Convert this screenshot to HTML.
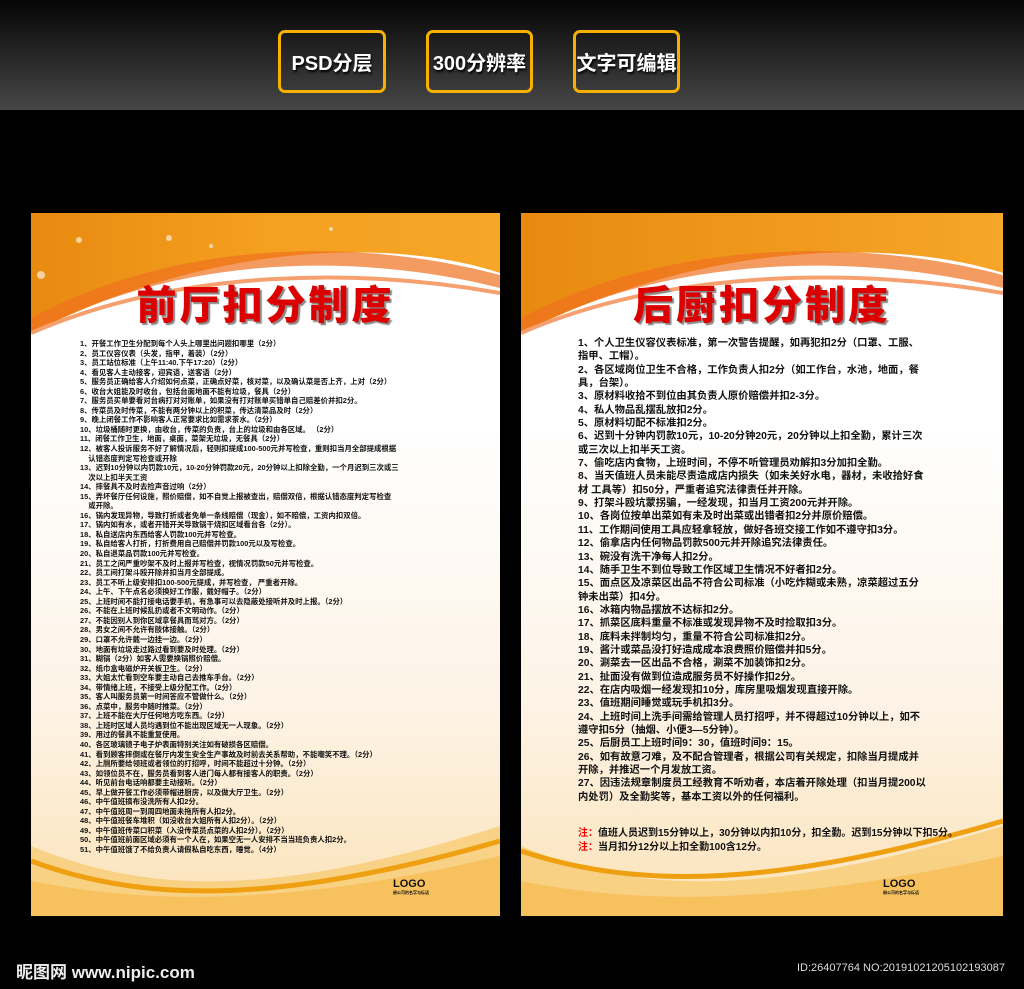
<!DOCTYPE html>
<html><head><meta charset="utf-8"><style>
*{margin:0;padding:0;box-sizing:border-box}
body{width:1024px;height:989px;background:#000;position:relative;overflow:hidden;font-family:"Liberation Sans","Noto Sans CJK SC",sans-serif}
.top{position:absolute;left:0;top:0;width:1024px;height:110px;background:linear-gradient(#050505,#474747)}
.btn{position:absolute;top:30px;height:63px;border:3px solid #f5b000;border-radius:7px;color:#fff;font-size:20px;font-weight:bold;display:flex;align-items:center;justify-content:center;text-shadow:1px 2px 2px #000}
.poster{position:absolute;top:213px;height:703px;overflow:hidden;background:linear-gradient(180deg,#fff 0%,#fff 30%,#fdf3e6 70%,#fbe3b9 100%)}
.hdr{position:absolute;left:0;top:0;width:100%;height:150px}
.title{position:absolute;top:60px;width:100%;text-align:center;font-size:40px;font-weight:900;color:#d00;letter-spacing:3px;text-shadow:2px 2px 1px #888}
.list{position:absolute;font-weight:bold;color:#111;white-space:nowrap}
.foot{position:absolute;left:0;bottom:0;width:100%;height:110px}
.logo{position:absolute;font-weight:bold;color:#111}
</style></head><body>
<div class="top"></div>
<div class="btn" style="left:278px;width:108px">PSD分层</div>
<div class="btn" style="left:426px;width:107px">300分辨率</div>
<div class="btn" style="left:573px;width:107px">文字可编辑</div>

<div class="poster" style="left:31px;width:469px">
<svg class="hdr" viewBox="0 0 469 150" preserveAspectRatio="none"><defs><linearGradient id="g1" x1="0" y1="0" x2="1" y2="0"><stop offset="0" stop-color="#e88a10"/><stop offset="0.5" stop-color="#f4a020"/><stop offset="1" stop-color="#f6a628"/></linearGradient></defs>
<path d="M0 0H469V60C380 30 200 20 0 120Z" fill="url(#g1)"/>
<path d="M0 120C150 40 330 40 469 75V62C330 25 150 25 0 105Z" fill="#f07020" opacity=".7"/>
<path d="M0 120C150 55 330 55 469 80" stroke="#f6a070" stroke-width="4" fill="none"/>
<circle cx="10" cy="62" r="4" fill="#fff" opacity=".6"/><circle cx="48" cy="27" r="3" fill="#fff" opacity=".6"/><circle cx="138" cy="25" r="3" fill="#fff" opacity=".6"/><circle cx="180" cy="33" r="2" fill="#fff" opacity=".6"/><circle cx="300" cy="16" r="2" fill="#fff" opacity=".6"/></svg>
<div class="title">前厅扣分制度</div>
<div class="list" style="left:49px;top:126px;font-size:7.4px;line-height:9.55px;width:410px">
1、开餐工作卫生分配到每个人头上哪里出问题扣哪里（2分）<br>2、员工仪容仪表（头发，指甲，着装）（2分）<br>3、员工站位标准（上午11:40.下午17:20）（2分）<br>4、看见客人主动接客，迎宾语，送客语（2分）<br>5、服务员正确给客人介绍如何点菜，正确点好菜，核对菜，以及确认菜是否上齐，上对（2分）<br>6、收台大姐能及时收台，包括台面地面不能有垃圾，餐具（2分）<br>7、服务员买单要看对台病打对对账单，如果没有打对账单买错单自己赔差价并扣2分。<br>8、传菜员及时传菜，不能有两分钟以上的积菜，传达清菜品及时（2分）<br>9、晚上闭餐工作不影响客人正常要求比如需求茶水。（2分）<br>10、垃圾桶随时更换，由收台，传菜的负责，台上的垃圾和由各区域。 （2分）<br>11、闭餐工作卫生，地面，桌面，菜架无垃圾，无餐具（2分）<br>12、被客人投诉服务不好了解情况后，轻则扣提成100-500元并写检查，重则扣当月全部提成根据<br>&nbsp;&nbsp;&nbsp;&nbsp;认错态度判定写检查或开除<br>13、迟到10分钟以内罚款10元，10-20分钟罚款20元，20分钟以上扣除全勤，一个月迟到三次或三<br>&nbsp;&nbsp;&nbsp;&nbsp;次以上扣半天工资<br>14、摔餐具不及时去捡声音过响（2分）<br>15、弄坏餐厅任何设施，照价赔偿，如不自觉上报被查出，赔偿双倍，根据认错态度判定写检查<br>&nbsp;&nbsp;&nbsp;&nbsp;或开除。<br>16、锅内发现异物，导致打折或者免单一条线赔偿（现金），如不赔偿，工资内扣双倍。<br>17、锅内如有水，或者开错开关导致锅干烧扣区域看台各（2分）。<br>18、私自送店内东西给客人罚款100元并写检查。<br>19、私自给客人打折，打折费用自己赔偿并罚款100元以及写检查。<br>20、私自退菜品罚款100元并写检查。<br>21、员工之间严重吵架不及时上报并写检查，视情况罚款50元并写检查。<br>22、员工间打架斗殴开除并扣当月全部提成。<br>23、员工不听上级安排扣100-500元提成，并写检查， 严重者开除。<br>24、上午、下午点名必须换好工作服，戴好帽子。（2分）<br>25、上班时间不能打接电话要手机，有急事可以去隐蔽处接听并及时上报。（2分）<br>26、不能在上班时候乱扔或者不文明动作。（2分）<br>27、不能因别人到你区域拿餐具而骂对方。（2分）<br>28、男女之间不允许有肢体接触。（2分）<br>29、口罩不允许戴一边挂一边。（2分）<br>30、地面有垃圾走过路过看到要及时处理。（2分）<br>31、糊锅（2分）如客人需要换锅照价赔偿。<br>32、纸巾盒电磁炉开关板卫生。（2分）<br>33、大姐太忙看到空车要主动自己去推车手台。（2分）<br>34、带情绪上班，不接受上级分配工作。（2分）<br>35、客人叫服务员第一时间答应不管做什么。（2分）<br>36、点菜中，服务中随时推菜。（2分）<br>37、上班不能在大厅任何地方吃东西。（2分）<br>38、上班时区域人员均遇到位不能出现区域无一人现象。（2分）<br>39、用过的餐具不能重复使用。<br>40、各区玻璃镜子电子炉表面特别关注如有破损各区赔偿。<br>41、看到顾客摔倒或在餐厅内发生安全生产事故及时前去关系帮助，不能嘲笑不理。（2分）<br>42、上厕所要给领班或者领位的打招呼，时间不能超过十分钟。（2分）<br>43、如领位员不在，服务员看到客人进门每人都有接客人的职责。（2分）<br>44、听见前台电话响都要主动接听。（2分）<br>45、早上做开餐工作必须带帽进厨房，以及做大厅卫生。（2分）<br>46、中午值班搞布没洗所有人扣2分。<br>47、中午值班周一到周四地面未拖所有人扣2分。<br>48、中午值班餐车堆积（如没收台大姐所有人扣2分）。（2分）<br>49、中午值班传菜口积菜（入没传菜员点菜的人扣2分）。（2分）<br>50、中午值班前面区域必须有一个人在，如果空无一人安排不当当班负责人扣2分。<br>51、中午值班饿了不给负责人请假私自吃东西，睡觉。（4分）
</div>
<svg class="foot" viewBox="0 0 469 110" preserveAspectRatio="none"><path d="M0 40C120 90 250 90 469 20V110H0Z" fill="#f7c35a" opacity=".6"/><path d="M0 55C120 100 260 95 469 35" stroke="#eea010" stroke-width="5" fill="none"/><path d="M0 75C150 105 300 90 469 50V110H0Z" fill="#f5b23a" opacity=".5"/></svg>
<div class="logo" style="left:362px;top:665px;font-size:11px">LOGO<div style="font-size:4px">册公司的名字与标语</div></div>
</div>

<div class="poster" style="left:521px;width:482px">
<svg class="hdr" viewBox="0 0 482 150" preserveAspectRatio="none"><defs><linearGradient id="g2" x1="0" y1="0" x2="1" y2="0"><stop offset="0" stop-color="#e88a10"/><stop offset="1" stop-color="#f6a628"/></linearGradient></defs>
<path d="M0 0H482V60C390 30 200 20 0 120Z" fill="url(#g2)"/>
<path d="M0 120C150 40 340 40 482 75V62C340 25 150 25 0 105Z" fill="#f07020" opacity=".7"/>
<path d="M0 120C150 55 340 55 482 80" stroke="#f6a070" stroke-width="4" fill="none"/></svg>
<div class="title">后厨扣分制度</div>
<svg class="foot" viewBox="0 0 482 110" preserveAspectRatio="none"><path d="M0 40C120 90 250 90 482 20V110H0Z" fill="#f7c35a" opacity=".6"/><path d="M0 45C120 85 260 80 482 15" stroke="#eea010" stroke-width="5" fill="none"/><path d="M0 75C150 105 300 90 482 50V110H0Z" fill="#f5b23a" opacity=".5"/></svg>
<div class="list" style="left:57px;top:124px;font-size:10.3px;line-height:13.35px">
1、个人卫生仪容仪表标准，第一次警告提醒，如再犯扣2分（口罩、工服、<br>指甲、工帽）。<br>2、各区域岗位卫生不合格，工作负责人扣2分（如工作台，水池，地面，餐<br>具，台架）。<br>3、原材料收拾不到位由其负责人原价赔偿并扣2-3分。<br>4、私人物品乱摆乱放扣2分。<br>5、原材料切配不标准扣2分。<br>6、迟到十分钟内罚款10元，10-20分钟20元，20分钟以上扣全勤，累计三次<br>或三次以上扣半天工资。<br>7、偷吃店内食物，上班时间，不停不听管理员劝解扣3分加扣全勤。<br>8、当天值班人员未能尽责造成店内损失（如未关好水电，器材，未收拾好食<br>材 工具等）扣50分，严重者追究法律责任并开除。<br>9、打架斗殴坑蒙拐骗，一经发现，扣当月工资200元并开除。<br>10、各岗位按单出菜如有未及时出菜或出错者扣2分并原价赔偿。<br>11、工作期间使用工具应轻拿轻放，做好各班交接工作如不遵守扣3分。<br>12、偷拿店内任何物品罚款500元并开除追究法律责任。<br>13、碗没有洗干净每人扣2分。<br>14、随手卫生不到位导致工作区域卫生情况不好者扣2分。<br>15、面点区及凉菜区出品不符合公司标准（小吃炸糊或未熟，凉菜超过五分<br>钟未出菜）扣4分。<br>16、冰箱内物品摆放不达标扣2分。<br>17、抓菜区底料重量不标准或发现异物不及时捡取扣3分。<br>18、底料未拌制均匀，重量不符合公司标准扣2分。<br>19、酱汁或菜品没打好造成成本浪费照价赔偿并扣5分。<br>20、涮菜去一区出品不合格，涮菜不加装饰扣2分。<br>21、扯面没有做到位造成服务员不好操作扣2分。<br>22、在店内吸烟一经发现扣10分，库房里吸烟发现直接开除。<br>23、值班期间睡觉或玩手机扣3分。<br>24、上班时间上洗手间需给管理人员打招呼，并不得超过10分钟以上，如不<br>遵守扣5分（抽烟、小便3—5分钟）。<br>25、后厨员工上班时间9：30，值班时间9：15。<br>26、如有故意刁难，及不配合管理者，根据公司有关规定，扣除当月提成并<br>开除，并推迟一个月发放工资。<br>27、因违法规章制度员工经教育不听劝者，本店着开除处理（扣当月提200以<br>内处罚）及全勤奖等，基本工资以外的任何福利。
</div>
<div class="list" style="left:57px;top:614px;font-size:10px;line-height:14px"><span style="color:#e00">注：</span>值班人员迟到15分钟以上，30分钟以内扣10分，扣全勤。迟到15分钟以下扣5分。<br><span style="color:#e00">注：</span>当月扣分12分以上扣全勤100含12分。</div>
<div class="logo" style="left:362px;top:665px;font-size:11px">LOGO<div style="font-size:4px">册公司的名字与标语</div></div>
</div>

<div style="position:absolute;left:16px;top:958px;color:#eee;font-size:17px;font-weight:bold">昵图网 www.nipic.com</div>
<div style="position:absolute;left:797px;top:962px;color:#ddd;font-size:11px">ID:26407764 NO:20191021205102193087</div>
</body></html>
